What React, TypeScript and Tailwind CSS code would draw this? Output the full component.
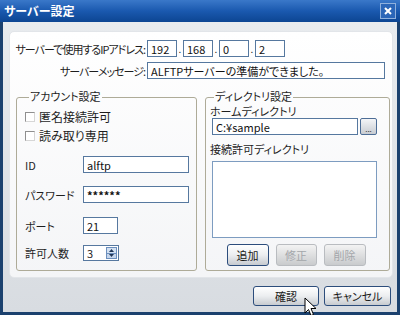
import React from "react";
import clsx from "clsx";

const font = "[font-family:'Noto_Sans_CJK_JP','Noto_Sans',sans-serif] [font-feature-settings:'palt']";

function Box({ value, className }: { value: string; className?: string }) {
  return (
    <input
      readOnly
      value={value}
      className={clsx(
        "h-[17px] border border-[#56789f] bg-white px-[3px] text-[11px] leading-[15px] text-[#111] outline-none",
        className
      )}
    />
  );
}

function Check({ label }: { label: string }) {
  return (
    <div className="flex h-[16px] items-center gap-[4px]">
      <span className="h-[10px] w-[10px] border border-[#8f8f8f] border-b-[#d6d6d6] border-r-[#d6d6d6] bg-white" />
      <span className="text-[12px] leading-[16px]">{label}</span>
    </div>
  );
}

function Btn({
  label,
  disabled,
  className,
}: {
  label: string;
  disabled?: boolean;
  className?: string;
}) {
  return (
    <button
      className={clsx(
        "flex items-center justify-center rounded-[3px] border text-[11px]",
        disabled
          ? "border-[#b9bcc0] bg-gradient-to-b from-[#f3f3f3] to-[#c9cbcd] text-[#a3a6aa]"
          : "border-[#2c4d7c] bg-gradient-to-b from-[#ffffff] via-[#eceef0] to-[#c7cbd0] text-[#1a1a1a]",
        className
      )}
    >
      {label}
    </button>
  );
}

function Row({ label, children, className }: { label: string; children: React.ReactNode; className?: string }) {
  return (
    <div className={clsx("flex items-center", className)}>
      <span className="w-[58px] text-[11px] leading-[14px]">{label}</span>
      {children}
    </div>
  );
}

function Label({ text }: { text: string }) {
  return (
    <div className="flex w-[129px] justify-end">
      <span className="whitespace-nowrap text-[11px] leading-[14px] tracking-[-1px]">{text}</span>
    </div>
  );
}

export default function App() {
  return (
    <div className={clsx("relative flex h-[315px] w-[400px] flex-col overflow-hidden bg-[#1b416e] text-[#1e1e1e]", font)}>
      {/* title bar */}
      <div className="flex h-[22px] items-center justify-between bg-gradient-to-b from-[#3a78c9] via-[#1a59af] to-[#0c4592] pl-[4px] pr-[4px]">
        <span className="text-[12px] font-bold leading-[14px] text-white">サーバー設定</span>
        <span className="flex h-[16px] w-[16px] items-center justify-center border border-[#8fb0dc] bg-[#2b66b8]">
          <svg width="8" height="8" viewBox="0 0 8 8">
            <path d="M1 1L7 7M7 1L1 7" stroke="white" strokeWidth="2" />
          </svg>
        </span>
      </div>

      {/* body */}
      <div className="mx-[3px] mb-[3px] flex flex-1 flex-col bg-gradient-to-b from-[#e8ebee] to-[#d8dce1] pl-[6px] pr-[4px] pt-[9px]">
        <div className="flex h-[247px] flex-col rounded-[5px] border border-[#e2e5e9] bg-gradient-to-b from-[#ffffff] to-[#f4f5f7] pl-[6px] pr-[2px] pt-[8px]">
          {/* IP row */}
          <div className="flex items-center">
            <Label text="サーバーで使用するIPアドレス:" />
            <div className="ml-[2px] flex items-center">
              <Box value="192" className="w-[30px]" />
              <span className="w-[6px] text-center text-[10px] leading-[10px]">.</span>
              <Box value="168" className="w-[30px]" />
              <span className="w-[6px] text-center text-[10px] leading-[10px]">.</span>
              <Box value="0" className="w-[30px]" />
              <span className="w-[6px] text-center text-[10px] leading-[10px]">.</span>
              <Box value="2" className="w-[30px]" />
            </div>
          </div>
          <div className="mt-[5px] flex items-center">
            <Label text="サーバーメッセージ:" />
            <Box value="ALFTPサーバーの準備ができました。" className="ml-[2px] w-[238px]" />
          </div>

          {/* groups */}
          <div className="mt-[12px] flex gap-[8px]">
            <fieldset className="flex h-[180px] w-[181px] flex-col rounded-[3px] border border-[#aeab98] pl-[8px] pr-[7px]">
              <legend className="ml-[4px] px-[1px] text-[11px] leading-[12px]">
                <span className="relative -top-[1px]">アカウント設定</span>
              </legend>
              <div className="mt-[6px]">
                <Check label="匿名接続許可" />
              </div>
              <div className="mt-[3px]">
                <Check label="読み取り専用" />
              </div>
              <Row label="ID" className="mt-[12px]">
                <Box value="alftp" className="w-[106px]" />
              </Row>
              <Row label="パスワード" className="mt-[13px]">
                <Box value="******" className="w-[106px] font-bold" />
              </Row>
              <Row label="ポート" className="mt-[14px]">
                <Box value="21" className="w-[35px]" />
              </Row>
              <Row label="許可人数" className="mt-[11px]">
                <div className="flex h-[16px] w-[36px] items-center border border-[#56789f] bg-white pl-[3px] pr-[1px]">
                  <span className="flex-1 text-[11px] leading-[14px]">3</span>
                  <div className="flex h-[12px] w-[11px] flex-col border border-[#6c8fbd]">
                    <span className="flex flex-1 items-center justify-center border-b border-[#6c8fbd] bg-[#d3e1f2]">
                      <svg width="5" height="3" viewBox="0 0 5 3"><path d="M0 3L2.5 0L5 3Z" fill="#1f3556" /></svg>
                    </span>
                    <span className="flex flex-1 items-center justify-center bg-[#c6d6ec]">
                      <svg width="5" height="3" viewBox="0 0 5 3"><path d="M0 0L2.5 3L5 0Z" fill="#1f3556" /></svg>
                    </span>
                  </div>
                </div>
              </Row>
            </fieldset>

            <fieldset className="flex h-[180px] w-[185px] flex-col rounded-[3px] border border-[#aeab98] pl-[4px] pr-[6px]">
              <legend className="ml-[4px] px-[1px] text-[11px] leading-[12px]">
                <span className="relative -top-[1px]">ディレクトリ設定</span>
              </legend>
              <span className="mt-[3px] text-[11px] leading-[11px]">ホームディレクトリ</span>
              <div className="ml-[2px] mt-[1px] flex items-center gap-[2px]">
                <Box value="C:¥sample" className="w-[146px]" />
                <span className="flex h-[17px] w-[17px] items-end justify-center rounded-[2px] border border-[#4d6d96] bg-gradient-to-b from-[#f4f5f7] to-[#c8ccd2] pb-[1px] text-[8px] leading-[8px] text-[#333]">
                  ...
                </span>
              </div>
              <span className="mt-[7px] text-[11px] leading-[14px]">接続許可ディレクトリ</span>
              <div className="ml-[2px] mt-[5px] h-[77px] w-[165px] border border-[#7d9cc0] bg-white" />
              <div className="ml-[2px] mt-[6px] flex w-[165px] justify-center gap-[7px] pl-[3px]">
                <Btn label="追加" className="h-[22px] w-[42px]" />
                <Btn label="修正" disabled className="h-[22px] w-[41px]" />
                <Btn label="削除" disabled className="h-[22px] w-[42px]" />
              </div>
            </fieldset>
          </div>
        </div>

        {/* footer */}
        <div className="mt-[8px] flex justify-end gap-[5px] pr-[2px]">
          <Btn label="確認" className="h-[20px] w-[66px]" />
          <Btn label="キャンセル" className="h-[20px] w-[67px]" />
        </div>
      </div>

      {/* mouse cursor */}
      <svg className="absolute left-[304px] top-[297px]" width="13" height="20" viewBox="0 0 13 20">
        <path d="M1 1L1 16L4.5 12.5L7 18.5L9.5 17.5L7 11.5L12 11.5Z" fill="white" stroke="black" strokeWidth="1" strokeLinejoin="round" />
      </svg>
    </div>
  );
}
